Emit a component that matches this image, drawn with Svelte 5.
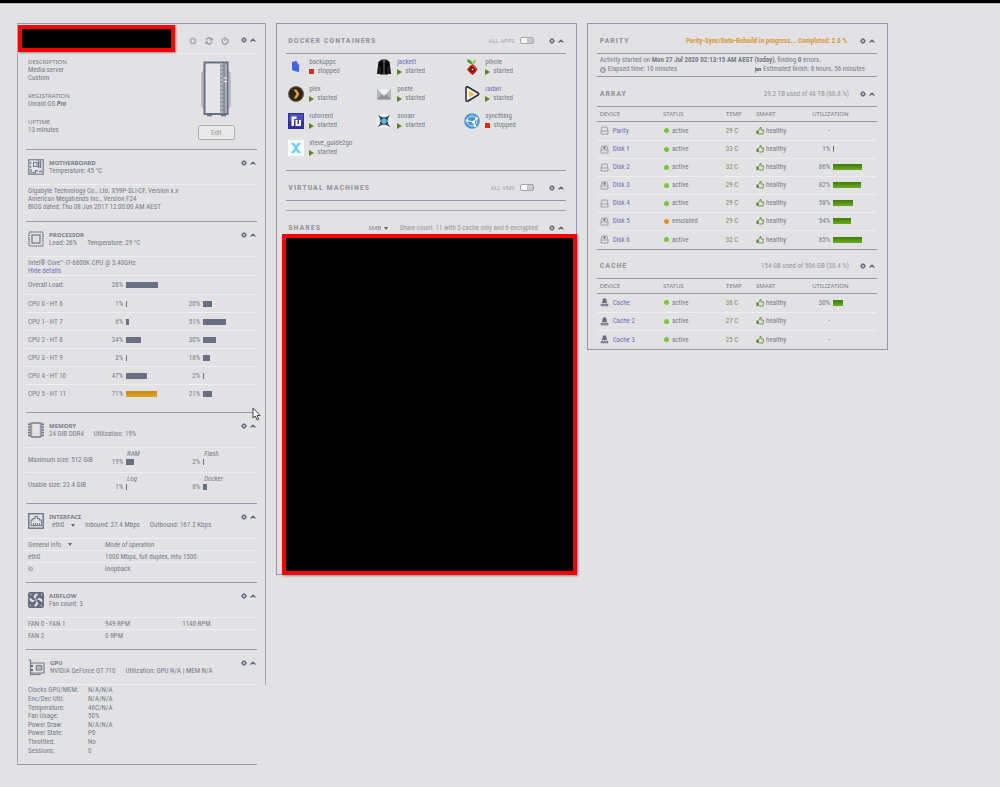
<script lang="ts">
  type App = { name: string; link?: boolean; running: boolean };
  type Disk = { name: string; mounted?: boolean; state: string; temp: string; used?: number };

  const apps: App[] = [
    { name: "backuppc", running: false },
    { name: "jackett", link: true, running: true },
    { name: "pihole", running: true },
    { name: "plex", running: true },
    { name: "poste", running: true },
    { name: "radarr", link: true, running: true },
    { name: "rutorrent", running: true },
    { name: "sonarr", running: true },
    { name: "syncthing", running: false },
    { name: "xteve_guide2go", running: true },
  ];

  const cores = [
    { name: "CPU 0 - HT 6", load: [1, 20] },
    { name: "CPU 1 - HT 7", load: [6, 51] },
    { name: "CPU 2 - HT 8", load: [34, 30] },
    { name: "CPU 3 - HT 9", load: [3, 16] },
    { name: "CPU 4 - HT 10", load: [47, 2] },
    { name: "CPU 5 - HT 11", load: [71, 21] },
  ];

  const memory = [
    { label: "Maximum size: 512 GiB", cells: [["RAM", 19], ["Flash", 2]] },
    { label: "Usable size: 23.4 GiB", cells: [["Log", 1], ["Docker", 8]] },
  ] as { label: string; cells: [string, number][] }[];

  const gpu = [
    ["Clocks GPU/MEM:", "N/A/N/A"],
    ["Enc/Dec Util:", "N/A/N/A"],
    ["Temperature:", "46C/N/A"],
    ["Fan Usage:", "50%"],
    ["Power Draw:", "N/A/N/A"],
    ["Power State:", "P0"],
    ["Throttled:", "No"],
    ["Sessions:", "0"],
  ];

  const array: Disk[] = [
    { name: "Parity", state: "active", temp: "29 C" },
    { name: "Disk 1", mounted: true, state: "active", temp: "33 C", used: 1 },
    { name: "Disk 2", state: "active", temp: "32 C", used: 86 },
    { name: "Disk 3", mounted: true, state: "active", temp: "29 C", used: 82 },
    { name: "Disk 4", state: "active", temp: "29 C", used: 58 },
    { name: "Disk 5", mounted: true, state: "emulated", temp: "29 C", used: 54 },
    { name: "Disk 6", mounted: true, state: "active", temp: "32 C", used: 85 },
  ];

  const cache: Disk[] = [
    { name: "Cache", state: "active", temp: "36 C", used: 30 },
    { name: "Cache 2", state: "active", temp: "27 C" },
    { name: "Cache 3", state: "active", temp: "25 C" },
  ];
</script>

{#snippet tools(name: string)}
  <span class="tools">
    <button aria-label="{name} settings">
      <svg width="6" height="6" viewBox="0 0 12 12">
        <circle cx="6" cy="6" r="3.2" fill="none" stroke="currentColor" stroke-width="2.6" />
        <path d="M6 0v2M6 10v2M0 6h2M10 6h2M1.8 1.8l1.4 1.4M8.8 8.8l1.4 1.4M10.2 1.8L8.8 3.2M3.2 8.8l-1.4 1.4" stroke="currentColor" stroke-width="2" />
      </svg>
    </button>
    <button aria-label="Collapse {name}">
      <svg width="6" height="6" viewBox="0 0 12 12">
        <path d="M1 9L6 4.4 11 9" fill="none" stroke="currentColor" stroke-width="2.6" />
      </svg>
    </button>
  </span>
{/snippet}

{#snippet meter(value: number)}
  <span class="meter">
    <span class="pct">{value}%</span>
    <span class="track"><span class="fill" class:warn={value > 60} style:width="{value}%"></span></span>
  </span>
{/snippet}

{#snippet appIcon(name: string)}
  <svg class="app-icon" width="16" height="16" viewBox="0 0 32 32" aria-hidden="true">
    {#if name === "backuppc"}
      <path d="M8 6l9-2 5 8v14l-9-2-5-2z" fill="#3f63ee" />
      <path d="M17 4l5 8-4-2z" fill="#7d98f6" />
    {:else if name === "jackett"}
      <path d="M11 1h10l6 5 3 24h-5l-1-4v5H8v-5l-1 4H2L5 6z" fill="#050505" />
      <path d="M13 1l3 5 3-5M16 6v25" fill="none" stroke="#c9c9cc" stroke-width="1.2" />
      <path d="M8 14v12M24 14v12" stroke="#77777a" />
    {:else if name === "pihole"}
      <path d="M17 10C8 10 6 5 6 1c7 0 10 3 11 9z" fill="#45a336" />
      <path d="M17 10c0-5 2-7 6-8 1 4-1 7-6 8z" fill="#7cc33d" />
      <path d="M17 10l5 4 5 7-5 7-5 4-5-4-6-7 6-7z" fill="#b52310" />
      <path d="M17 10l5 4 5 7-8-1z" fill="#e04a24" />
      <circle cx="17" cy="21" r="4.5" fill="#4b0805" />
      <circle cx="17" cy="21" r="2" fill="#f2e6e4" />
    {:else if name === "plex"}
      <circle cx="16" cy="16" r="15.5" fill="#262626" />
      <circle cx="16" cy="16" r="14.6" fill="none" stroke="#85641d" stroke-width="1.4" />
      <path d="M11 7h6l6 9-6 9h-6l6-9z" fill="#e6a522" />
    {:else if name === "poste"}
      <path d="M2 5h28v22H2z" fill="#b2b6b9" />
      <path d="M2 27l11-11h6l11 11z" fill="#8d9497" />
      <path d="M2 5h28L16 20z" fill="#eceff0" />
    {:else if name === "radarr"}
      <path d="M4 4c0-3 2-3 4-2l20 12c2 1 2 3 0 4L8 30c-2 1-4 1-4-2z" fill="#f4f4f2" stroke="#222831" stroke-width="3" />
      <path d="M10 10l11 6-11 7z" fill="#f4bd2d" />
    {:else if name === "rutorrent"}
      <rect width="32" height="32" fill="#2c30a0" />
      <path d="M2 2h28v14H2z" fill="#4a50bb" />
      <path d="M7 26V7h10v5h-5v14z" fill="#fff" />
      <path d="M15 14h4v8h3v-8h4v12H15z" fill="#fff" />
    {:else if name === "sonarr"}
      <circle cx="16" cy="16" r="15.5" fill="#eceef0" />
      <path d="M4 4l7 4h10l7-4-4 7v10l4 7-7-4H11l-7 4 4-7V11z" fill="#34445c" />
      <path d="M11 6h10l-3 3h-4zM11 26h10l-3-3h-4zM6 11v10l3-3v-4zM26 11v10l-3-3v-4z" fill="#dfe3e8" />
      <circle cx="16" cy="16" r="5.5" fill="#55b9ee" />
    {:else if name === "syncthing"}
      <circle cx="16" cy="16" r="15.5" fill="#4b95cf" />
      <circle cx="16" cy="16" r="10" fill="none" stroke="#d7e9f5" stroke-width="2" />
      <path d="M19 18L27 9M19 18L6 15M19 18l3 8" stroke="#fff" stroke-width="2.2" />
      <g fill="#fff">
        <circle cx="19" cy="18" r="3.2" />
        <circle cx="25" cy="11" r="2.6" />
        <circle cx="6" cy="15" r="2.6" />
        <circle cx="22" cy="26" r="2.6" />
      </g>
    {:else}
      <rect width="32" height="32" fill="#fbfdfe" />
      <path d="M6 6h7l3 5 3-5h7l-7 10 7 10h-7l-3-5-3 5H6l7-10z" fill="#6fd4f7" />
    {/if}
  </svg>
{/snippet}

{#snippet diskTable(disks: Disk[], ssd: boolean)}
  <table>
    <thead>
      <tr>
        <th class="c-device">Device</th>
        <th class="c-status">Status</th>
        <th class="c-temp">Temp</th>
        <th class="c-smart">Smart</th>
        <th>Utilization</th>
      </tr>
    </thead>
    <tbody>
      {#each disks as disk}
        <tr>
          <td>
            <span class="with-icon device">
              <svg width="9" height="9" viewBox="0 0 18 18" aria-hidden="true">
                {#if ssd}
                  <path d="M6 1h6l2 9H4z" fill="#676f82" />
                  <path d="M2 12h14v4H2z" fill="#8d93a1" stroke="#676f82" />
                {:else}
                  <path d="M2 10L4 2h10l2 8v6H2zM2 10h14" fill="none" stroke="#8d93a1" stroke-width="1.6" />
                  {#if disk.mounted}
                    <path d="M9 3v5M6.500 5.500h5" stroke="#6d7585" stroke-width="2" />
                  {/if}
                {/if}
              </svg>
              <a href="#{disk.name}">{disk.name}</a>
            </span>
          </td>
          <td><span class="with-icon status"><i class="dot {disk.state}"></i>{disk.state}</span></td>
          <td class="temp">{disk.temp}</td>
          <td>
            <span class="with-icon">
              <svg width="8" height="8" viewBox="0 0 16 16" aria-hidden="true">
                <path d="M1 7h3v7H1z" fill="#56872c" />
                <path d="M5 7l3-3V1h2v5h5l-1 8H6l-1-1z" fill="none" stroke="#56872c" stroke-width="1.600" />
              </svg>
              healthy
            </span>
          </td>
          <td>
            {#if disk.used !== undefined}
              <span class="meter usage">
                <span class="pct">{disk.used}%</span>
                <span class="track"><span class="fill green" style:width="{disk.used}%"></span></span>
              </span>
            {:else}
              <span class="none">-</span>
            {/if}
          </td>
        </tr>
      {/each}
    </tbody>
  </table>
{/snippet}

<main>
  <section class="panel system">
    <div class="framed">
      <header class="server">
        <div class="redacted name"></div>
        <div class="power">
          <button aria-label="Stop">
            <svg width="8" height="8" viewBox="0 0 16 16"><circle cx="8" cy="8" r="5" fill="none" stroke="#b4b6be" stroke-width="4" /></svg>
          </button>
          <button aria-label="Reboot">
            <svg width="8" height="8" viewBox="0 0 16 16">
              <path d="M2 7a6 6 0 0 1 10.500-3M14 9a6 6 0 0 1-10.500 3" fill="none" stroke="#8b8f9b" stroke-width="2.2" />
              <path d="M15 1v6H9zM1 15V9h6z" fill="#8b8f9b" />
            </svg>
          </button>
          <button aria-label="Shut down">
            <svg width="8" height="8" viewBox="0 0 16 16">
              <path d="M5 3.200a6 6 0 1 0 6 0M8 0v8" fill="none" stroke="#8b8f9b" stroke-width="2.2" />
            </svg>
          </button>
        </div>
        {@render tools("Server")}
      </header>

      <div class="overview">
        <dl>
          <div><dt>Description</dt><dd>Media server</dd><dd>Custom</dd></div>
          <div><dt>Registration</dt><dd>Unraid OS <b><em>Pro</em></b></dd></div>
          <div><dt>Uptime</dt><dd>13 minutes</dd></div>
        </dl>
        <div class="case">
          <svg width="30" height="56" viewBox="0 0 60 112" aria-hidden="true">
            <path d="M7 18L2 24v66l5 6M53 18l5 6v66l-5 6" fill="#c9cbd2" stroke="#9a9fab" stroke-width="2" />
            <rect x="7" y="3" width="46" height="103" fill="#e6e6e9" stroke="#677083" stroke-width="4" />
            <path d="M38 5h6v99h-6z" fill="#b4b8c2" />
            <path d="M38 10h6M38 18h6M38 26h6M38 34h6M38 42h6M38 50h6M38 58h6M38 66h6M38 74h6M38 82h6M38 90h6M38 98h6" stroke="#989eab" stroke-width="5" />
            <path d="M46 3v103" stroke="#677083" stroke-width="3" />
            <path d="M49.500 5v99" stroke="#a9aeb9" stroke-width="3" />
            <path d="M45 34h7M45 41h7" stroke="#f2f2f4" stroke-width="2" />
            <path d="M12 109h10M40 109h10" stroke="#677083" stroke-width="3" />
          </svg>
          <button class="edit">Edit</button>
        </div>
      </div>

      <section class="block">
        <header>
          <svg class="glyph" width="16" height="16" viewBox="0 0 32 32" aria-hidden="true">
            <rect x="1.500" y="1.500" width="29" height="29" fill="none" stroke="#747c8d" stroke-width="2.400" />
            <rect x="11" y="7" width="7" height="8" fill="none" stroke="#747c8d" stroke-width="2" />
            <path d="M21 3v15M25 3v15" stroke="#747c8d" stroke-width="3" />
            <path d="M5 6v4M5 13v5M6 20v7h9v-4h5M22 25h6" fill="none" stroke="#747c8d" stroke-width="2.500" />
            <path d="M3 27h9M22 22h7" stroke="#bb9a86" stroke-width="1" />
          </svg>
          <div class="heading">
            <h3>Motherboard</h3>
            <p>Temperature: 45 °C</p>
          </div>
          {@render tools("Motherboard")}
        </header>
        <div class="lines board">
          <p>Gigabyte Technology Co., Ltd. X99P-SLI-CF, Version x.x</p>
          <p>American Megatrends Inc., Version F24</p>
          <p>BIOS dated: Thu 08 Jun 2017 12:00:00 AM AEST</p>
        </div>
      </section>

      <section class="block">
        <header>
          <svg class="glyph" width="16" height="16" viewBox="0 0 32 32" aria-hidden="true">
            <rect x="2" y="2" width="28" height="28" rx="3" fill="none" stroke="#747c8d" stroke-width="3" stroke-dasharray="2.600 1.200" />
            <rect x="8" y="8" width="16" height="16" fill="none" stroke="#747c8d" stroke-width="2.600" />
          </svg>
          <div class="heading">
            <h3>Processor</h3>
            <p><span>Load: 26%</span><span>Temperature: 29 °C</span></p>
          </div>
          {@render tools("Processor")}
        </header>
        <div class="lines cpu">
          <p>Intel® Core™ i7-6800K CPU @ 3.40GHz</p>
          <p><a href="#cores">Hide details</a></p>
        </div>
        <div class="row core overall">
          <span>Overall Load:</span>
          {@render meter(26)}
        </div>
        {#each cores as core}
          <div class="row core">
            <span>{core.name}</span>
            {@render meter(core.load[0])}
            {@render meter(core.load[1])}
          </div>
        {/each}
      </section>

      <section class="block memory">
        <svg class="pointer" width="9" height="14" viewBox="0 0 9 14" aria-hidden="true">
          <path d="M1 1v10l2.300-2 1.700 4 1.700-.8L5 8.500h3z" fill="#fff" stroke="#333" stroke-width=".9" />
        </svg>
        <header>
          <svg class="glyph" width="16" height="16" viewBox="0 0 32 32" aria-hidden="true">
            <rect x="6" y="2" width="20" height="28" rx="1" fill="none" stroke="#747c8d" stroke-width="2.600" />
            <path d="M2.500 3v26M29.500 3v26" stroke="#747c8d" stroke-width="5" stroke-dasharray="3.500 2" />
            <path d="M8 4v24M24 4v24" stroke="#c4a58e" stroke-width="1" />
          </svg>
          <div class="heading">
            <h3>Memory</h3>
            <p><span>24 GiB DDR4</span><span>Utilization: 19%</span></p>
          </div>
          {@render tools("Memory")}
        </header>
        {#each memory as line}
          <div class="row mem">
            <span>{line.label}</span>
            {#each line.cells as [name, value]}
              <span class="named">
                <em>{name}</em>
                {@render meter(value)}
              </span>
            {/each}
          </div>
        {/each}
      </section>

      <section class="block interface">
        <header>
          <svg class="glyph" width="16" height="16" viewBox="0 0 32 32" aria-hidden="true">
            <rect x="1.500" y="1.500" width="29" height="29" fill="none" stroke="#747c8d" stroke-width="3" />
            <path d="M6 25V14h4v-3h4V7h5v4h4v3h4v11z" fill="none" stroke="#747c8d" stroke-width="2.200" />
            <path d="M11 20v4M15 20v4M19 20v4M23 20v4" stroke="#747c8d" stroke-width="2" />
            <path d="M3 28h26" stroke="#c4a58e" stroke-width="1" />
          </svg>
          <div class="heading">
            <h3>Interface</h3>
            <p>
              <span class="select port"><select aria-label="Port"><option>eth0</option></select></span>
              <span>Inbound: 27.4 Mbps</span><span>Outbound: 167.2 Kbps</span>
            </p>
          </div>
          {@render tools("Interface")}
        </header>
        <div class="row slim">
          <span class="select"><select aria-label="View"><option>General info</option></select></span>
          <em>Mode of operation</em>
        </div>
        <div class="row slim"><span>eth0</span><span class="wide">1000 Mbps, full duplex, mtu 1500</span></div>
        <div class="row slim"><span>lo</span><span>loopback</span></div>
      </section>

      <section class="block airflow">
        <header>
          <svg class="glyph" width="16" height="16" viewBox="0 0 32 32" aria-hidden="true">
            <rect width="32" height="32" rx="4" fill="#666e80" />
            <g fill="#e2e2e4">
              <path d="M14 13C10 9 12 4 18 3c3 1 2 3-1 5-1 2-1 3-1 5z" />
              <path d="M19 14c4-4 9-2 10 4-1 3-3 2-5-1-2-1-3-1-5-1z" />
              <path d="M18 19c4 4 2 9-4 10-3-1-2-3 1-5 1-2 1-3 1-5z" />
              <path d="M13 18c-4 4-9 2-10-4 1-3 3-2 5 1 2 1 3 1 5 1z" />
              <circle cx="16" cy="16" r="1.500" />
              <path d="M3 5l3-2 1 3zM27 3l2 3-3 1zM29 27l-3 2-1-3zM5 29l-2-3 3-1z" />
            </g>
          </svg>
          <div class="heading">
            <h3>Airflow</h3>
            <p>Fan count: 3</p>
          </div>
          {@render tools("Airflow")}
        </header>
        <div class="row slim"><span>FAN 0 - FAN 1</span><span>949 RPM</span><span>1140 RPM</span></div>
        <div class="row slim"><span>FAN 2</span><span>0 RPM</span></div>
      </section>

      <section class="block">
        <header>
          <svg class="glyph" width="17" height="17" viewBox="0 0 34 34" aria-hidden="true">
            <path d="M1 2h4v31" fill="none" stroke="#747c8d" stroke-width="2.400" />
            <path d="M5 8h27v20H5M8 28v3h16v-3" fill="none" stroke="#747c8d" stroke-width="2.400" />
            <rect x="17" y="13" width="10" height="9" fill="none" stroke="#747c8d" stroke-width="2" />
            <path d="M14 16h16M14 20h16M20 11v13M24 11v13" stroke="#8e95a3" stroke-width="1.200" />
            <path d="M8 12v4M8 20v4" stroke="#666e80" stroke-width="4" />
          </svg>
          <div class="heading">
            <h3>GPU</h3>
            <p><span>NVIDIA GeForce GT 710</span><span>Utilization: GPU N/A | MEM N/A</span></p>
          </div>
          {@render tools("GPU")}
        </header>
      </section>
    </div>

    <dl class="gpu">
      {#each gpu as [label, value]}
        <dt>{label}</dt><dd>{value}</dd>
      {/each}
    </dl>
  </section>

  <section class="panel boxed docker">
    <header>
      <h2>Docker Containers</h2>
      <label class="toggle">All apps <input type="checkbox" /></label>
      {@render tools("Docker")}
    </header>
    <ul class="apps">
      {#each apps as app}
        <li>
          {@render appIcon(app.name)}
          <div>
            <span class="app-name" class:link={app.link}>{app.name}</span>
            <span class="app-state">
              <i class={app.running ? "play" : "stop"}></i>{app.running ? "started" : "stopped"}
            </span>
          </div>
        </li>
      {/each}
    </ul>
    <header class="vms">
      <h2>Virtual Machines</h2>
      <label class="toggle">All VMs <input type="checkbox" /></label>
      {@render tools("Virtual machines")}
    </header>
    <div class="empty"></div>
    <header class="shares">
      <h2>Shares</h2>
      <span class="select caps"><select aria-label="Share type"><option>SMB</option></select></span>
      <span class="note">Share count: 11 with 3 cache only and 6 encrypted</span>
      {@render tools("Shares")}
    </header>
    <div class="redacted list"></div>
  </section>

  <section class="panel boxed storage">
    <header>
      <h2>Parity</h2>
      <span class="note progress">Parity-Sync/Data-Rebuild in progress... Completed: 2.0 %.</span>
      {@render tools("Parity")}
    </header>
    <div class="activity">
      <p>Activity started on <b>Mon 27 Jul 2020 02:13:15 AM AEST (today)</b>, finding <b>0</b> errors.</p>
      <p class="times">
        <span class="with-icon">
          <svg width="6" height="6" viewBox="0 0 12 12" aria-hidden="true">
            <circle cx="6" cy="6" r="4.800" fill="none" stroke="currentColor" stroke-width="2" />
            <path d="M6 3v3.500h2.500" fill="none" stroke="currentColor" stroke-width="1.600" />
          </svg>
          Elapsed time: 10 minutes
        </span>
        <span class="with-icon">
          <svg width="6" height="6" viewBox="0 0 12 12" aria-hidden="true">
            <path d="M1 0v12" stroke="currentColor" stroke-width="1.600" />
            <path d="M2 2h10v6H2z" fill="currentColor" />
            <path d="M5 4h2M8 6h2" stroke="#e2e2e4" stroke-width="1.500" />
          </svg>
          Estimated finish: 8 hours, 56 minutes
        </span>
      </p>
    </div>
    <header>
      <h2>Array</h2>
      <span class="note">29.2 TB used of 48 TB (60.8 %)</span>
      {@render tools("Array")}
    </header>
    {@render diskTable(array, false)}
    <header>
      <h2>Cache</h2>
      <span class="note">154 GB used of 506 GB (30.4 %)</span>
      {@render tools("Cache")}
    </header>
    {@render diskTable(cache, true)}
  </section>
</main>

<style>
  :global(body) {
    background: #e2e2e4;
    color: #757c8b;
    font: 7px/8px "Roboto Condensed", Roboto, sans-serif;
    border-top: 3px solid #000;
  }

  main {
    display: grid;
    grid-template-columns: minmax(0, 249fr) minmax(0, 300fr) minmax(0, 301fr);
    align-items: start;
    gap: 10px;
    padding: 19px 11.2% 21px 17px;
    border-top: 1px solid #b9b9be;
  }

  h2,
  h3,
  p,
  dl,
  dd,
  ul {
    margin: 0;
    padding: 0;
  }

  button,
  select,
  input {
    font: inherit;
    color: inherit;
    appearance: none;
    margin: 0;
    padding: 0;
    border: 0;
    background: none;
  }

  svg {
    display: block;
    flex: none;
  }

  a,
  .link {
    color: #6a71b8;
    text-decoration: none;
  }

  .tools {
    display: flex;
    gap: 3px;
    color: #666e7e;
  }

  /* the server column is left open at its lower right corner */
  .system {
    border-left: 1px solid #a6a8b5;
  }

  .framed {
    border-top: 1px solid #9498a6;
    border-right: 1px solid #a6a8b5;
    padding: 0 8px;
  }

  .server {
    display: flex;
    align-items: center;
    height: 29px;
    border-bottom: 1px solid #f0f0f2;
  }

  .redacted {
    background: #000;
    border: 4px solid #f90000;
    box-shadow: 1px 1px 2px #8a8a8e;
    box-sizing: border-box;
  }

  .redacted.name {
    flex: 1;
    height: 27px;
    margin-left: -8px;
  }

  .power {
    display: flex;
    gap: 8px;
    margin: 4px 12px 0 14px;
  }

  .server .tools {
    margin: 2px 1px 0 0;
  }

  .overview {
    display: flex;
    justify-content: space-between;
    padding: 4px 0 9px 2px;
  }

  .overview dl {
    display: flex;
    flex-direction: column;
    gap: 10px;
  }

  dt {
    font: 6px/8px "Noto Sans", sans-serif;
    text-transform: uppercase;
  }

  .case {
    display: flex;
    flex-direction: column;
    align-items: center;
    gap: 8px;
    width: 82px;
    padding-top: 3px;
  }

  .edit {
    width: 37px;
    height: 15px;
    border: 1px solid #b3aca6;
    border-radius: 2px;
    background: #e9e8ec;
    color: #a39c96;
  }

  .block {
    position: relative;
    border-top: 1px solid #959aa8;
  }

  .block header {
    display: flex;
    align-items: center;
    gap: 5px;
    height: 34px;
    padding: 0 1px 0 2px;
    border-bottom: 1px solid #eeeef0;
  }

  .block .tools {
    margin: 0 0 9px auto;
  }

  h3 {
    font: bold 6px/8px "Noto Sans", sans-serif;
    text-transform: uppercase;
  }

  .heading p {
    display: flex;
    gap: 10px;
    white-space: nowrap;
  }

  .lines {
    padding: 2px;
  }

  .board {
    padding: 2px 2px 10px;
  }

  .cpu {
    padding-bottom: 0;
  }

  .row {
    display: grid;
    grid-template-columns: repeat(3, 1fr);
    align-items: center;
    box-sizing: border-box;
    border-top: 1px solid #eeeef0;
    white-space: nowrap;
  }

  .row > :first-child {
    padding-left: 2px;
  }

  .core {
    height: 18px;
  }

  .core.overall {
    height: 19px;
  }

  .core:last-child {
    height: 28px;
    padding-bottom: 9px;
  }

  .overall .meter {
    grid-column: span 2;
  }

  .meter {
    display: flex;
    align-items: center;
    gap: 3px;
  }

  .pct {
    width: 20px;
    text-align: right;
  }

  .track {
    flex: 1;
    margin-right: 10px;
  }

  .fill {
    display: block;
    height: 6px;
    min-width: 1px;
    background: #687084;
  }

  .fill.warn {
    background: linear-gradient(#c68a1b, #dda420);
  }

  .fill.green {
    background: linear-gradient(#3f7a0c, #6aae1c);
  }

  .mem {
    height: 24px;
  }

  .memory {
    padding-bottom: 7px;
  }

  .named {
    padding-bottom: 4px;
  }

  .named em {
    display: block;
    padding-left: 24px;
  }

  .pointer {
    position: absolute;
    top: -6px;
    right: -4px;
  }

  .slim {
    height: 12px;
  }

  .block header + .row {
    border-top: 0;
  }

  .block header + .slim {
    height: 11px;
  }

  .slim > :nth-child(n + 2) {
    padding-left: 2px;
  }

  .wide {
    grid-column: span 2;
  }

  .interface,
  .airflow {
    padding-bottom: 8px;
  }

  .select {
    display: inline-flex;
    align-items: center;
    gap: 6px;
  }

  .select::after {
    content: "";
    border: 2px solid transparent;
    border-top: 3px solid #626a7b;
    border-bottom: 0;
  }

  .port {
    padding-left: 3px;
  }

  .gpu {
    display: grid;
    grid-template-columns: 60px 1fr;
    grid-auto-rows: 1fr;
    align-items: center;
    min-height: 69px;
    margin-right: 9px;
    padding: 1px 0 9px 10px;
    border-bottom: 1px solid #9498a6;
  }

  .gpu dt {
    font: inherit;
    text-transform: none;
  }

  .boxed {
    border: 1px solid #9498a6;
    padding: 0 10px 0 9px;
  }

  .boxed > header {
    display: flex;
    align-items: center;
    gap: 11px;
    height: 30px;
    padding: 4px 2px 0;
    box-sizing: border-box;
    border-bottom: 1px solid #9498a6;
  }

  .storage > header {
    padding-left: 3px;
  }

  h2 {
    font-size: 8px;
    line-height: 10px;
    letter-spacing: 1px;
    text-transform: uppercase;
    color: #93959f;
    margin-right: auto;
  }

  .toggle {
    display: flex;
    align-items: center;
    gap: 5px;
    font: 6px/8px "Noto Sans", sans-serif;
    text-transform: uppercase;
    color: #a3a4ab;
  }

  .toggle input {
    width: 14px;
    height: 7px;
    margin-right: 4px;
    border: 1px solid #a5a5a8;
    border-radius: 2px;
    background: linear-gradient(90deg, #f8f8f8 50%, #c9c9cb 50%);
  }

  .apps {
    display: grid;
    grid-template-columns: repeat(3, 88px);
    row-gap: 9px;
    padding: 4px 2px 13px;
    list-style: none;
  }

  .apps li {
    display: flex;
    align-items: center;
    gap: 5px;
    height: 18px;
  }

  .app-name,
  .app-state {
    display: flex;
    align-items: center;
    line-height: 9px;
  }

  .app-state {
    gap: 3px;
  }

  .play {
    border: 3px solid transparent;
    border-left: 5px solid #578625;
    border-right: 0;
  }

  .stop {
    width: 5px;
    height: 5px;
    background: #cd3016;
  }

  .boxed > .vms {
    height: 31px;
    border-top: 1px solid #9498a6;
  }

  .empty {
    height: 9px;
    border-bottom: 1px solid #a6a8b5;
  }

  .boxed > .shares {
    height: 23px;
    padding-top: 11px;
    border: 0;
  }

  .caps {
    gap: 3px;
    font: 6px/8px "Noto Sans", sans-serif;
  }

  .note {
    color: #93959f;
  }

  .progress {
    color: #d79a3c;
    font-weight: 700;
  }

  .redacted.list {
    height: 341px;
    margin: 0 -11px -1px -4px;
  }

  .activity {
    padding: 2px 2px 2px 3px;
    border-bottom: 1px solid #9498a6;
    line-height: 9px;
  }

  .times {
    display: flex;
    justify-content: space-between;
    padding-right: 10px;
  }

  .with-icon {
    display: flex;
    align-items: center;
    gap: 2px;
  }

  table {
    width: 100%;
    table-layout: fixed;
    border-collapse: collapse;
  }

  th,
  td {
    box-sizing: border-box;
    padding: 0 0 0 3px;
    text-align: left;
  }

  th {
    height: 14px;
    font: 6px/8px "Noto Sans", sans-serif;
    text-transform: uppercase;
  }

  thead tr {
    border-bottom: 1px solid #9498a6;
  }

  td {
    height: 18px;
  }

  tbody tr:first-child td,
  tbody tr:last-child td {
    height: 19px;
  }

  tbody tr + tr {
    border-top: 1px solid #eeeef0;
  }

  .storage table + header {
    border-top: 1px solid #9498a6;
  }

  .c-device {
    width: 22.6%;
  }

  .c-status {
    width: 22.4%;
  }

  .c-temp {
    width: 10.8%;
  }

  .c-smart {
    width: 20%;
  }

  .device {
    gap: 4px;
  }

  .status {
    gap: 3px;
    padding-left: 1px;
  }

  .dot {
    width: 5px;
    height: 5px;
    border-radius: 50%;
    background: #7ac63c;
  }

  .dot.emulated {
    background: #e2962c;
  }

  .temp {
    color: #7e8c55;
  }

  .usage .pct {
    width: 18px;
  }

  .none {
    padding-left: 16px;
  }
</style>
